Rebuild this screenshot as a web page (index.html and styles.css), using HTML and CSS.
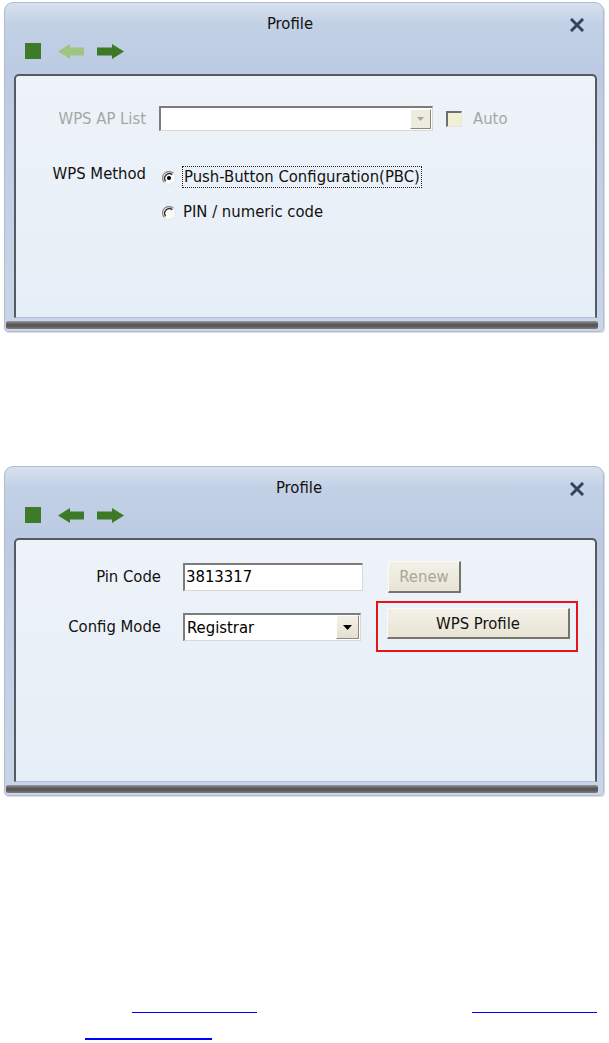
FILE: index.html
```html
<!DOCTYPE html>
<html>
<head>
<meta charset="utf-8">
<link rel="stylesheet" href="styles.css">
</head>
<body>
<div class="page">

  <div class="dialog">
    <div class="titlebar">
      <span></span>
      <div class="title title-one">Profile</div>
      <svg class="close" width="14" height="14" viewBox="0 0 14 14"><path d="M2 2 L12 12 M12 2 L2 12" stroke="#34425f" stroke-width="3" stroke-linecap="square"/></svg>
    </div>
    <div class="toolbar">
      <svg width="16" height="16" viewBox="0 0 16 16"><rect x="0" y="0" width="16" height="16" fill="#3f7a2b"/></svg>
      <svg width="27" height="15" viewBox="0 0 27 15"><path d="M27 3.5 H13 V0 L1 7.5 L13 15 V11.5 H27 Z" fill="#9fc680"/></svg>
      <svg width="28" height="15" viewBox="0 0 28 15"><path d="M0 3.5 H15 V0 L27 7.5 L15 15 V11.5 H0 Z" fill="#3d7a28"/></svg>
    </div>
    <div class="panel">
      <div class="row ap-row">
        <div class="label label-top disabled">WPS AP List</div>
        <div class="combo combo-ap">
          <div class="combo-btn disabled-btn"><svg width="7" height="4" viewBox="0 0 7 4"><path d="M0 0 H7 L3.5 4 Z" fill="#a8a494"/></svg></div>
        </div>
        <div class="check"></div>
        <div class="check-text disabled">Auto</div>
      </div>
      <div class="row method-row">
        <div class="label label-top method-label">WPS Method</div>
        <div class="radios">
          <div class="radio-item">
            <svg class="radio" width="14" height="14" viewBox="0 0 14 14"><circle cx="7" cy="7" r="6.3" fill="#fbfbf8"/><path d="M11.6 2.4 A6.4 6.4 0 0 0 2.4 11.6" stroke="#8c8c8c" stroke-width="1.3" fill="none"/><path d="M10.3 3.7 A4.7 4.7 0 0 0 3.7 10.3" stroke="#2f2f2f" stroke-width="1.4" fill="none"/><path d="M2.4 11.6 A6.4 6.4 0 0 0 11.6 2.4" stroke="#e6e6e6" stroke-width="1" fill="none"/><circle cx="7" cy="7" r="2.1" fill="#000"/></svg>
            <span class="focus">Push-Button Configuration(PBC)</span>
          </div>
          <div class="radio-item">
            <svg class="radio" width="14" height="14" viewBox="0 0 14 14"><circle cx="7" cy="7" r="6.3" fill="#fbfbf8"/><path d="M11.6 2.4 A6.4 6.4 0 0 0 2.4 11.6" stroke="#8c8c8c" stroke-width="1.3" fill="none"/><path d="M10.3 3.7 A4.7 4.7 0 0 0 3.7 10.3" stroke="#2f2f2f" stroke-width="1.4" fill="none"/><path d="M2.4 11.6 A6.4 6.4 0 0 0 11.6 2.4" stroke="#e6e6e6" stroke-width="1" fill="none"/></svg>
            <span class="plain">PIN / numeric code</span>
          </div>
        </div>
      </div>
    </div>
    <div class="bottombar"></div>
  </div>

  <div class="dialog dialog-two">
    <div class="titlebar">
      <span></span>
      <div class="title title-two">Profile</div>
      <svg class="close" width="14" height="14" viewBox="0 0 14 14"><path d="M2 2 L12 12 M12 2 L2 12" stroke="#34425f" stroke-width="3" stroke-linecap="square"/></svg>
    </div>
    <div class="toolbar">
      <svg width="16" height="16" viewBox="0 0 16 16"><rect x="0" y="0" width="16" height="16" fill="#3f7a2b"/></svg>
      <svg width="27" height="15" viewBox="0 0 27 15"><path d="M27 3.5 H13 V0 L1 7.5 L13 15 V11.5 H27 Z" fill="#3d7a28"/></svg>
      <svg width="28" height="15" viewBox="0 0 28 15"><path d="M0 3.5 H15 V0 L27 7.5 L15 15 V11.5 H0 Z" fill="#3d7a28"/></svg>
    </div>
    <div class="panel panel-two">
      <div class="row pin-row">
        <div class="label label-wide">Pin Code</div>
        <div class="textbox">3813317</div>
        <div class="btn btn-renew">Renew</div>
      </div>
      <div class="row mode-row">
        <div class="label label-wide">Config Mode</div>
        <div class="combo combo-mode">
          <span class="combo-text">Registrar</span>
          <div class="combo-btn"><svg width="9" height="5" viewBox="0 0 9 5"><path d="M0 0 H9 L4.5 5 Z" fill="#000"/></svg></div>
        </div>
        <div class="highlight">
          <div class="btn btn-wps">WPS Profile</div>
        </div>
      </div>
    </div>
    <div class="bottombar"></div>
  </div>

  <div class="links">
    <div class="link-row link-row-one">
      <span class="link link-a"></span>
      <span class="link link-b"></span>
    </div>
    <div class="link-row link-row-two">
      <span class="link link-c"></span>
    </div>
  </div>

</div>
</body>
</html>
```

FILE: styles.css
```css
html, body {
  margin: 0;
  padding: 0;
  background: #ffffff;
}

body {
  font-family: "DejaVu Sans Condensed", "DejaVu Sans", sans-serif;
  font-size: 16.5px;
  color: #111;
  width: 609px;
  height: 1043px;
  overflow: hidden;
}

.page {
  padding-top: 2px;
}

.dialog {
  margin-left: 4px;
  width: 598px;
  border: 1px solid #aebbd0;
  border-radius: 9px 9px 4px 4px;
  background: linear-gradient(180deg, #d7e1ef 0px, #c3d1e6 20px, #bccbe2 70px, #c9d6e9 100%);
  padding-bottom: 2px;
  box-shadow: 1px 1px 0 #d8dde6;
}

.dialog-two {
  margin-top: 134px;
}

.titlebar {
  display: grid;
  grid-template-columns: 1fr auto 1fr;
  align-items: center;
  height: 32px;
  padding-top: 12px;
  box-sizing: border-box;
  align-content: start;
}

.title {
  font-size: 16.5px;
  line-height: 18px;
  color: #111;
}

.title-one {
  margin-right: 28px;
}

.title-two {
  margin-right: 10px;
}

.close {
  justify-self: end;
  margin-right: 19px;
  margin-top: 1px;
}

.toolbar {
  display: flex;
  align-items: center;
  height: 39px;
  box-sizing: border-box;
  padding: 8px 0 15px 20px;
  gap: 16px;
}

.toolbar svg:nth-child(3) {
  margin-left: -3px;
}

.panel {
  margin: 0 6px 0 9px;
  height: 244px;
  box-sizing: border-box;
  border: 2px solid #565b62;
  border-bottom: 1px solid #b3bfd0;
  border-radius: 5px 5px 0 0;
  background: linear-gradient(180deg, #eef3f9 0px, #e6eef7 100%);
  padding-top: 30px;
}

.panel-two {
  padding-top: 21px;
}

.bottombar {
  margin: 3px 5px 0 1px;
  height: 8px;
  border-radius: 2px;
  background: linear-gradient(180deg, #9a9a9a 0px, #5c5c5c 3px, #555 5px, #7d7d7d 8px);
}

.row {
  display: flex;
  align-items: center;
}

.label {
  width: 130px;
  text-align: right;
  flex: none;
  line-height: 20px;
  white-space: nowrap;
}

.label-wide {
  width: 145px;
}

.disabled {
  color: #a6a6a6;
}

.combo {
  display: flex;
  align-items: center;
  justify-content: space-between;
  box-sizing: border-box;
  background: #fff;
  border-top: 2px solid #7c7c7c;
  border-left: 2px solid #7c7c7c;
  border-right: 1px solid #d8d8d8;
  border-bottom: 1px solid #d8d8d8;
  padding: 0 1px 0 0;
  flex: none;
}

.combo-ap {
  width: 274px;
  height: 25px;
  margin-left: 13px;
  justify-content: flex-end;
}

.combo-btn {
  width: 21px;
  height: 20px;
  box-sizing: border-box;
  background: linear-gradient(180deg, #f4f2e8, #e4e0cf);
  border-right: 1px solid #8a877c;
  border-bottom: 1px solid #8a877c;
  border-top: 1px solid #fff;
  border-left: 1px solid #fff;
  display: flex;
  align-items: center;
  justify-content: center;
}

.disabled-btn {
  background: #eeebdf;
}

.check {
  width: 16px;
  height: 16px;
  box-sizing: border-box;
  margin-left: 13px;
  border-top: 2px solid #6e6e6e;
  border-left: 2px solid #6e6e6e;
  border-right: 1px solid #e4e4e4;
  border-bottom: 1px solid #e4e4e4;
  background: #f1f0d3;
  flex: none;
}

.check-text {
  margin-left: 11px;
}

.method-row {
  margin-top: 35px;
  align-items: flex-start;
}

.method-label {
  line-height: 20px;
  margin-top: -2px;
}

.radios {
  display: flex;
  flex-direction: column;
  gap: 13px;
  margin-left: 16px;
}

.radio-item {
  display: flex;
  align-items: center;
  height: 22px;
}

.radio {
  flex: none;
  margin-top: 2px;
}

.focus {
  margin-left: 6px;
  border: 1px dotted #222;
  padding: 1px 1px 1px 1px;
  line-height: 18px;
  white-space: nowrap;
}

.plain {
  margin-left: 7px;
  line-height: 20px;
  white-space: nowrap;
}

.pin-row {
  height: 32px;
}

.textbox {
  margin-left: 22px;
  width: 180px;
  height: 28px;
  box-sizing: border-box;
  background: #fff;
  border-top: 2px solid #7c7c7c;
  border-left: 2px solid #7c7c7c;
  border-right: 1px solid #d8d8d8;
  border-bottom: 1px solid #d8d8d8;
  line-height: 24px;
  padding-left: 1px;
  flex: none;
  color: #000;
}

.btn {
  box-sizing: border-box;
  display: flex;
  align-items: center;
  justify-content: center;
  background: linear-gradient(180deg, #f3f1e8, #e8e4d4);
  border-top: 1px solid #fbfaf6;
  border-left: 1px solid #fbfaf6;
  border-right: 2px solid #76746c;
  border-bottom: 2px solid #76746c;
  flex: none;
}

.btn-renew {
  margin-left: 25px;
  width: 73px;
  height: 32px;
  color: #aaa798;
}

.mode-row {
  margin-top: 8px;
}

.combo-mode {
  margin-left: 22px;
  width: 178px;
  height: 28px;
}

.combo-text {
  padding-left: 2px;
  color: #000;
}

.combo-mode .combo-btn {
  width: 23px;
  height: 24px;
}

.highlight {
  margin-left: 15px;
  width: 202px;
  height: 51px;
  box-sizing: border-box;
  border: 2px solid #e5141b;
  padding: 5px 0 0 9px;
  flex: none;
}

.btn-wps {
  width: 183px;
  height: 31px;
  color: #111;
}

.links {
  margin-top: 216px;
}

.link-row {
  display: flex;
}

.link {
  display: block;
  height: 0;
  border-bottom: 1px solid #0000ff;
}

.link-a {
  margin-left: 132px;
  width: 125px;
}

.link-b {
  margin-left: 215px;
  width: 125px;
}

.link-row-two {
  margin-top: 25px;
}

.link-c {
  margin-left: 85px;
  width: 127px;
  border-bottom-width: 2px;
}
```
